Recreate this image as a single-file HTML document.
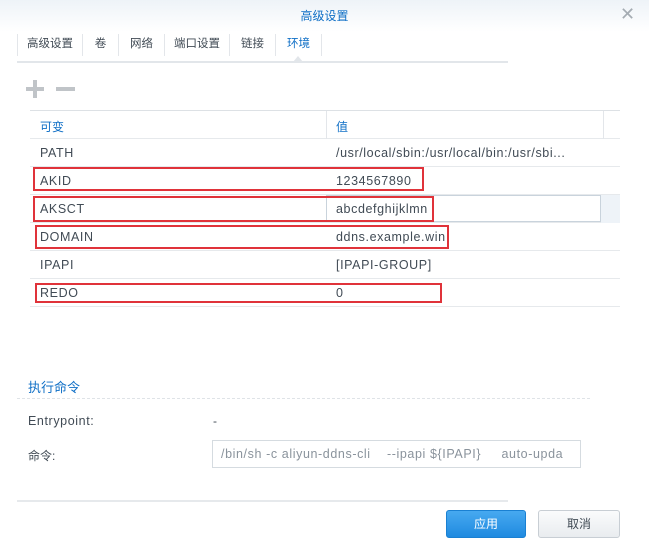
<!DOCTYPE html>
<html><head><meta charset="utf-8"><style>
*{margin:0;padding:0;box-sizing:border-box}
body{width:649px;height:545px;background:#fff;font-family:"Liberation Sans","Noto Sans CJK SC",sans-serif;font-size:12px;color:#414b55;position:relative;overflow:hidden}
.a{position:absolute}
.t{font-size:12.5px;letter-spacing:0.6px}
.hdr{left:0;top:0;width:649px;height:32px;background:linear-gradient(#eef3f8,#fff)}
.title{left:0;width:649px;top:7px;text-align:center;color:#0f6fc6;font-size:12px}
.tab{top:34px;height:22px;line-height:20px;border-left:1px solid #e3e6ea;text-align:center;font-size:11.5px}
.row{left:30px;width:590px;height:28px;border-bottom:1px solid #e6e9ec}
.c1{position:absolute;left:10px;top:7px}
.c2{position:absolute;left:306px;top:7px}
.red{position:absolute;border:2px solid #e0333a}
</style></head><body>
<div class="a hdr"></div>
<div class="a title">高级设置</div>
<div class="a" style="left:620px;top:4px;font-size:18px;color:#a5acb3">✕</div>
<div class="a tab" style="left:17px;width:65px">高级设置</div>
<div class="a tab" style="left:82px;width:36px">卷</div>
<div class="a tab" style="left:118px;width:46px">网络</div>
<div class="a tab" style="left:164px;width:65px">端口设置</div>
<div class="a tab" style="left:229px;width:46px">链接</div>
<div class="a tab" style="left:275px;width:46px;color:#0f6fc6">环境</div>
<div class="a" style="left:321px;top:34px;width:1px;height:22px;background:#e3e6ea"></div>
<div class="a" style="left:17px;top:61px;width:491px;height:2px;background:#e2e6ea"></div>
<div class="a" style="left:293px;top:56px;width:0;height:0;border-left:5px solid transparent;border-right:5px solid transparent;border-bottom:6px solid #e2e6ea"></div>
<div class="a" style="left:26px;top:87px;width:18px;height:4px;background:#c0c4c8"></div>
<div class="a" style="left:33px;top:80px;width:4px;height:18px;background:#c0c4c8"></div>
<div class="a" style="left:56px;top:87px;width:19px;height:4px;background:#c0c4c8"></div>
<div class="a" style="left:30px;top:110px;width:590px;height:1px;background:#dde1e5"></div>
<div class="a row" style="top:111px;color:#0f6fc6"><span class="c1">可变</span><span class="c2">值</span></div>
<div class="a" style="left:326px;top:111px;width:1px;height:28px;background:#e3e6ea"></div>
<div class="a" style="left:603px;top:111px;width:1px;height:28px;background:#e3e6ea"></div>
<div class="a row t" style="top:139px"><span class="c1">PATH</span><span class="c2">/usr/local/sbin:/usr/local/bin:/usr/sbi...</span></div>
<div class="a row t" style="top:167px"><span class="c1">AKID</span><span class="c2">1234567890</span></div>
<div class="a row" style="top:195px"></div>
<div class="a" style="left:601px;top:195px;width:19px;height:28px;background:#eef3f8"></div>
<div class="a" style="left:326px;top:195px;width:275px;height:27px;background:#fff;border:1px solid #c9d3dc"></div>
<div class="a t" style="left:40px;top:202px">AKSCT</div>
<div class="a t" style="left:336px;top:202px">abcdefghijklmn</div>
<div class="a row t" style="top:223px"><span class="c1">DOMAIN</span><span class="c2">ddns.example.win</span></div>
<div class="a row t" style="top:251px"><span class="c1">IPAPI</span><span class="c2">[IPAPI-GROUP]</span></div>
<div class="a row t" style="top:279px"><span class="c1">REDO</span><span class="c2">0</span></div>
<div class="red" style="left:33px;top:167px;width:391px;height:24px"></div>
<div class="red" style="left:33px;top:196px;width:401px;height:26px"></div>
<div class="red" style="left:35px;top:225px;width:414px;height:24px"></div>
<div class="red" style="left:35px;top:283px;width:407px;height:20px"></div>
<div class="a" style="left:28px;top:377px;font-size:13px;color:#0f6fc6">执行命令</div>
<div class="a" style="left:17px;top:398px;width:573px;border-top:1px dashed #dfe3e7"></div>
<div class="a t" style="left:28px;top:414px">Entrypoint:</div>
<div class="a" style="left:213px;top:414px">-</div>
<div class="a" style="left:28px;top:447px">命令:</div>
<div class="a t" style="left:212px;top:440px;width:369px;height:28px;border:1px solid #d5dbe0;color:#8a939c;padding:6px 0 0 8px;white-space:nowrap;overflow:hidden">/bin/sh -c aliyun-ddns-cli &nbsp;&nbsp;&nbsp;--ipapi ${IPAPI} &nbsp;&nbsp;&nbsp;&nbsp;auto-upda</div>
<div class="a" style="left:17px;top:500px;width:491px;height:2px;background:#e6e9ec"></div>
<div class="a" style="left:446px;top:510px;width:80px;height:28px;border-radius:3px;background:linear-gradient(#47a9f0,#1f8ae0);color:#fff;text-align:center;line-height:26px;border:1px solid #1a80d2">应用</div>
<div class="a" style="left:538px;top:510px;width:82px;height:28px;border-radius:3px;background:linear-gradient(#fafbfc,#e9ecef);border:1px solid #c8ced4;text-align:center;line-height:26px">取消</div>
</body></html>
